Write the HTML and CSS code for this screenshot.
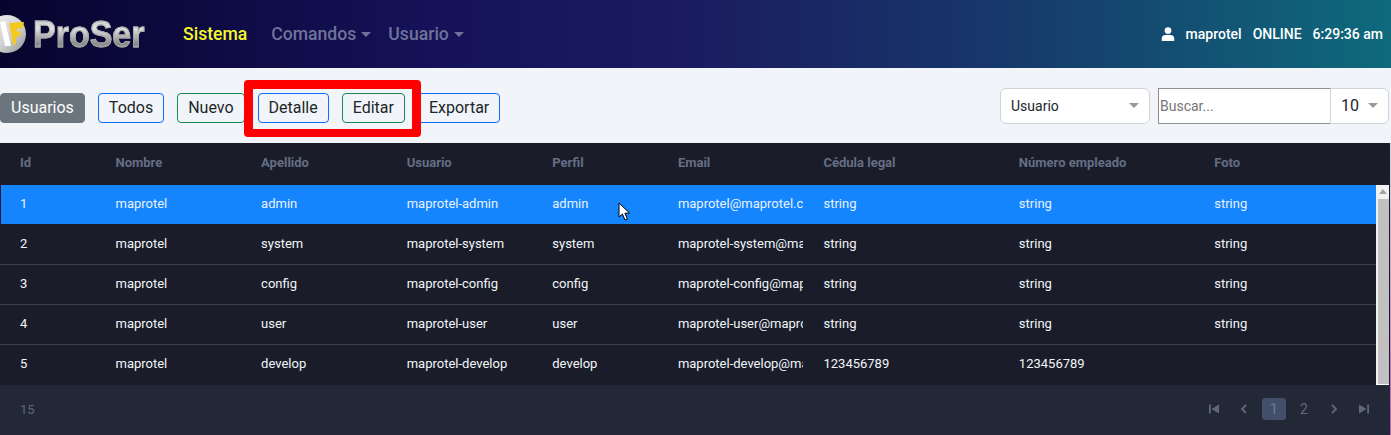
FILE: index.html
```html
<!DOCTYPE html>
<html>

<head>
    <title>ProSer</title>
    <link rel="stylesheet" href="styles.css">
</head>

<body>
    <nav class="navbar">
        <div class="brand">
            <svg class="brand-icon" width="33" height="40" viewBox="0 0 33 40">
                <defs>
                    <linearGradient id="disc" x1="0" y1="0" x2="1" y2="1">
                        <stop offset="0" stop-color="#f2f2f2" />
                        <stop offset="0.6" stop-color="#cfcfcf" />
                        <stop offset="1" stop-color="#8d8d8d" />
                    </linearGradient>
                </defs>
                <circle cx="7" cy="20" r="19" fill="url(#disc)" />
                <path d="M0 8 L5 7 L11 32 L5 32 Z" fill="#fff" />
                <path d="M9 9 L24 8 L23 14 L17 15 L17 18 L21 17 L20 22 L16 23 L16 31 L13 30 Z" fill="#f4c91f" />
            </svg>
            <span class="brand-text">ProSer</span>
        </div>
        <ul class="nav-links">
            <li class="nav-active">Sistema</li>
            <li class="nav-drop">Comandos</li>
            <li class="nav-drop">Usuario</li>
        </ul>
        <div class="nav-status">
            <svg width="14" height="14" viewBox="0 0 14 14">
                <circle cx="7" cy="3.6" r="3.4" fill="#fff" />
                <path d="M0.8 14 V11.4 C0.8 9 2.6 8 4.4 8 H9.6 C11.4 8 13.2 9 13.2 11.4 V14 Z" fill="#fff" />
            </svg>
            <span>maprotel</span>
            <span>ONLINE</span>
            <span>6:29:36 am</span>
        </div>
    </nav>

    <div class="toolbar">
        <div class="toolbar-buttons">
            <span class="btn btn-title">Usuarios</span>
            <span class="btn btn-blue">Todos</span>
            <span class="btn btn-green">Nuevo</span>
            <span class="btn btn-blue">Detalle</span>
            <span class="btn btn-green">Editar</span>
            <span class="btn btn-blue">Exportar</span>
        </div>
        <div class="toolbar-filters">
            <div class="select select-field">Usuario<i class="caret"></i></div>
            <div class="search-group">
                <div class="search-input">Buscar...</div>
                <div class="select select-size">10<i class="caret"></i></div>
            </div>
        </div>
    </div>

    <!-- red mark drawn over the screenshot -->
    <div class="highlight"></div>

    <div class="table-wrap">
        <div class="row row-head">
            <div>Id</div>
            <div>Nombre</div>
            <div>Apellido</div>
            <div>Usuario</div>
            <div>Perfil</div>
            <div>Email</div>
            <div>Cédula legal</div>
            <div>Número empleado</div>
            <div>Foto</div>
        </div>
        <div class="table-body">
            <div class="rows">
                <div class="row row-selected">
                    <div>1</div>
                    <div>maprotel</div>
                    <div>admin</div>
                    <div>maprotel-admin</div>
                    <div>admin</div>
                    <div>maprotel@maprotel.c</div>
                    <div>string</div>
                    <div>string</div>
                    <div>string</div>
                </div>
                <div class="row">
                    <div>2</div>
                    <div>maprotel</div>
                    <div>system</div>
                    <div>maprotel-system</div>
                    <div>system</div>
                    <div>maprotel-system@ma</div>
                    <div>string</div>
                    <div>string</div>
                    <div>string</div>
                </div>
                <div class="row">
                    <div>3</div>
                    <div>maprotel</div>
                    <div>config</div>
                    <div>maprotel-config</div>
                    <div>config</div>
                    <div>maprotel-config@map</div>
                    <div>string</div>
                    <div>string</div>
                    <div>string</div>
                </div>
                <div class="row">
                    <div>4</div>
                    <div>maprotel</div>
                    <div>user</div>
                    <div>maprotel-user</div>
                    <div>user</div>
                    <div>maprotel-user@mapro</div>
                    <div>string</div>
                    <div>string</div>
                    <div>string</div>
                </div>
                <div class="row">
                    <div>5</div>
                    <div>maprotel</div>
                    <div>develop</div>
                    <div>maprotel-develop</div>
                    <div>develop</div>
                    <div>maprotel-develop@ma</div>
                    <div>123456789</div>
                    <div>123456789</div>
                    <div></div>
                </div>
            </div>
            <div class="scrollbar">
                <div class="scroll-up"></div>
                <div class="scroll-thumb"></div>
            </div>
        </div>
        <div class="table-footer">
            <span class="total">15</span>
            <div class="pager">
                <svg class="pager-item" width="12" height="12" viewBox="0 0 12 12"><path d="M1 1.5 H2.8 V10.5 H1 Z M11 1.5 V10.5 L3.5 6 Z" fill="#5d677d" /></svg>
                <svg class="pager-item" width="12" height="12" viewBox="0 0 12 12"><path d="M8 2 L4 6 L8 10" fill="none" stroke="#5d677d" stroke-width="1.8" /></svg>
                <span class="pager-item pager-current">1</span>
                <span class="pager-item">2</span>
                <svg class="pager-item" width="12" height="12" viewBox="0 0 12 12"><path d="M4 2 L8 6 L4 10" fill="none" stroke="#5d677d" stroke-width="1.8" /></svg>
                <svg class="pager-item" width="12" height="12" viewBox="0 0 12 12"><path d="M11 1.5 H9.2 V10.5 H11 Z M1 1.5 V10.5 L8.5 6 Z" fill="#5d677d" /></svg>
            </div>
        </div>
    </div>

    <svg class="cursor" width="14" height="20" viewBox="0 0 14 20">
        <path d="M1 1 V15 L4.4 12 L7 18 L9.4 17 L6.9 11.3 L11.5 11 Z" fill="#fff" stroke="#000" stroke-width="1" />
    </svg>
</body>

</html>
```
FILE: styles.css
```css
* {
    box-sizing: border-box;
}

body {
    margin: 0;
    height: 435px;
    overflow: hidden;
    background-color: #f1f5f9;
    font-family: Roboto, "Liberation Sans", sans-serif;
}

/* Top bar */
.navbar {
    display: flex;
    align-items: center;
    height: 68px;
    background: linear-gradient(90deg, #07042e 0%, #15125a 32%, #1b1a60 48%, #17386a 72%, #0e6a7c 100%);
}

.brand {
    display: flex;
    align-items: center;
    width: 183px;
}

.brand-icon {
    flex-shrink: 0;
}

.brand-text {
    font-family: "Liberation Sans", sans-serif;
    font-size: 34px;
    font-weight: 700;
    transform: scaleY(1.08);
    background: linear-gradient(180deg, #c4c4c4 10%, #e2e2e2 35%, #8a8a8a 72%, #b4b4b4 90%);
    -webkit-background-clip: text;
    background-clip: text;
    color: transparent;
    -webkit-text-stroke: 0.8px #a9a9a9;
}

.nav-links {
    display: flex;
    gap: 24px;
    list-style: none;
    margin: 0;
    padding: 0;
    font-size: 17.6px;
    font-weight: 500;
    color: #6f7399;
}

.nav-active {
    color: #f5f72b;
}

.nav-drop::after {
    content: "";
    display: inline-block;
    margin-left: 5px;
    vertical-align: 3px;
    border-top: 5px solid #6f7399;
    border-left: 5px solid transparent;
    border-right: 5px solid transparent;
}

.nav-links .nav-drop:last-child {
    margin-left: -7px;
}

.nav-status {
    display: flex;
    align-items: center;
    gap: 11px;
    margin-left: auto;
    padding-right: 8px;
    font-size: 14px;
    font-weight: 500;
    color: #fff;
}

/* Buttons and filters */
.toolbar {
    display: flex;
    align-items: center;
    justify-content: space-between;
    height: 75px;
    padding: 0 2px 0 0;
}

.toolbar-buttons {
    display: flex;
    gap: 13px;
    margin-top: 4px;
}

.btn {
    display: block;
    height: 30px;
    line-height: 28px;
    padding: 0 10px;
    border: 1px solid #000;
    border-radius: 4px;
    font-size: 16px;
    color: #212529;
}

.btn-title {
    background-color: #6c757d;
    border-color: #6c757d;
    color: #fff;
}

.btn-blue {
    border-color: #0d6efd;
}

.btn-green {
    border-color: #198754;
}

.toolbar-filters {
    display: flex;
    gap: 8px;
}

.select {
    position: relative;
    height: 36px;
    line-height: 34px;
    background-color: #fff;
    border: 1px solid #ced4da;
    border-radius: 6px;
    font-size: 14px;
    color: #212529;
}

.select-field {
    width: 150px;
    padding-left: 10px;
}

.caret {
    position: absolute;
    right: 10px;
    top: 14px;
    border-top: 5px solid #999;
    border-left: 5px solid transparent;
    border-right: 5px solid transparent;
}

.search-group {
    display: flex;
}

.search-input {
    width: 173px;
    height: 36px;
    line-height: 34px;
    padding-left: 1px;
    background-color: #fff;
    border: 1px solid #8f8f8f;
    font-size: 14px;
    color: #757575;
}

.select-size {
    width: 59px;
    margin-left: -1px;
    padding-left: 10px;
    border-radius: 0 6px 6px 0;
    font-size: 16px;
}

.highlight {
    position: absolute;
    left: 244px;
    top: 80px;
    width: 177px;
    height: 57px;
    border: 9px solid #fe0000;
    border-bottom-width: 8px;
    border-radius: 4px;
}

/* Table */
.table-wrap {
    width: 1391px;
    height: 292px;
    background-color: #1a1d29;
    border-right: 1px solid;
    border-image: linear-gradient(180deg, #d8dbe3, #b565ae) 1;
    color: #f1f5f9;
    font-size: 13px;
}

.row {
    display: grid;
    grid-template-columns: 95.5px 145.6px 145.6px 145.6px 125.6px 145.6px 195.4px 195.4px 1fr;
    align-items: center;
    height: 40px;
    padding-bottom: 2px;
    border-bottom: 1px solid #3a3f4d;
}

.row:last-child {
    border-bottom-color: #1a1d29;
}

.row > div {
    padding-left: 20px;
    white-space: nowrap;
    overflow: hidden;
}

.row-head {
    height: 42px;
    padding-bottom: 4px;
    border-bottom: none;
    font-weight: 700;
    color: #646e85;
}

.table-body {
    display: flex;
    height: 200px;
}

.rows {
    flex: 1;
}

.row-selected {
    margin-left: 1px;
    grid-template-columns: 94.5px 145.6px 145.6px 145.6px 125.6px 145.6px 195.4px 195.4px 1fr;
    background-color: #1585fe;
    border-bottom-color: #1a1d29;
    color: #e8f2ff;
}

.row-selected > div:first-child {
    padding-left: 19px;
}

.scrollbar {
    width: 13px;
    margin-right: 1px;
    padding-left: 2px;
    background-color: #f1f1f1;
    border-bottom: 1px solid #fff;
}

.scroll-up {
    height: 14px;
    position: relative;
}

.scroll-up::after {
    content: "";
    position: absolute;
    left: 1px;
    top: 4px;
    border-bottom: 5px solid #a3a3a3;
    border-left: 4px solid transparent;
    border-right: 4px solid transparent;
}

.scroll-thumb {
    height: 185px;
    background-color: #c1c1c1;
}

.table-footer {
    display: flex;
    align-items: center;
    justify-content: space-between;
    height: 50px;
    padding: 0 14px 2px 20px;
    background-color: #232836;
    color: #5d677d;
}

.pager {
    display: flex;
    align-items: center;
}

.pager-item {
    display: block;
    width: 24px;
    height: 22px;
    margin-left: 6px;
    line-height: 22px;
    text-align: center;
    font-size: 14px;
    border-radius: 3px;
    padding: 5px 6px;
}

span.pager-item {
    padding: 0;
}

.pager-current {
    background-color: #434e68;
    color: #6f7b96;
}

.cursor {
    position: absolute;
    left: 618px;
    top: 202px;
}
```
